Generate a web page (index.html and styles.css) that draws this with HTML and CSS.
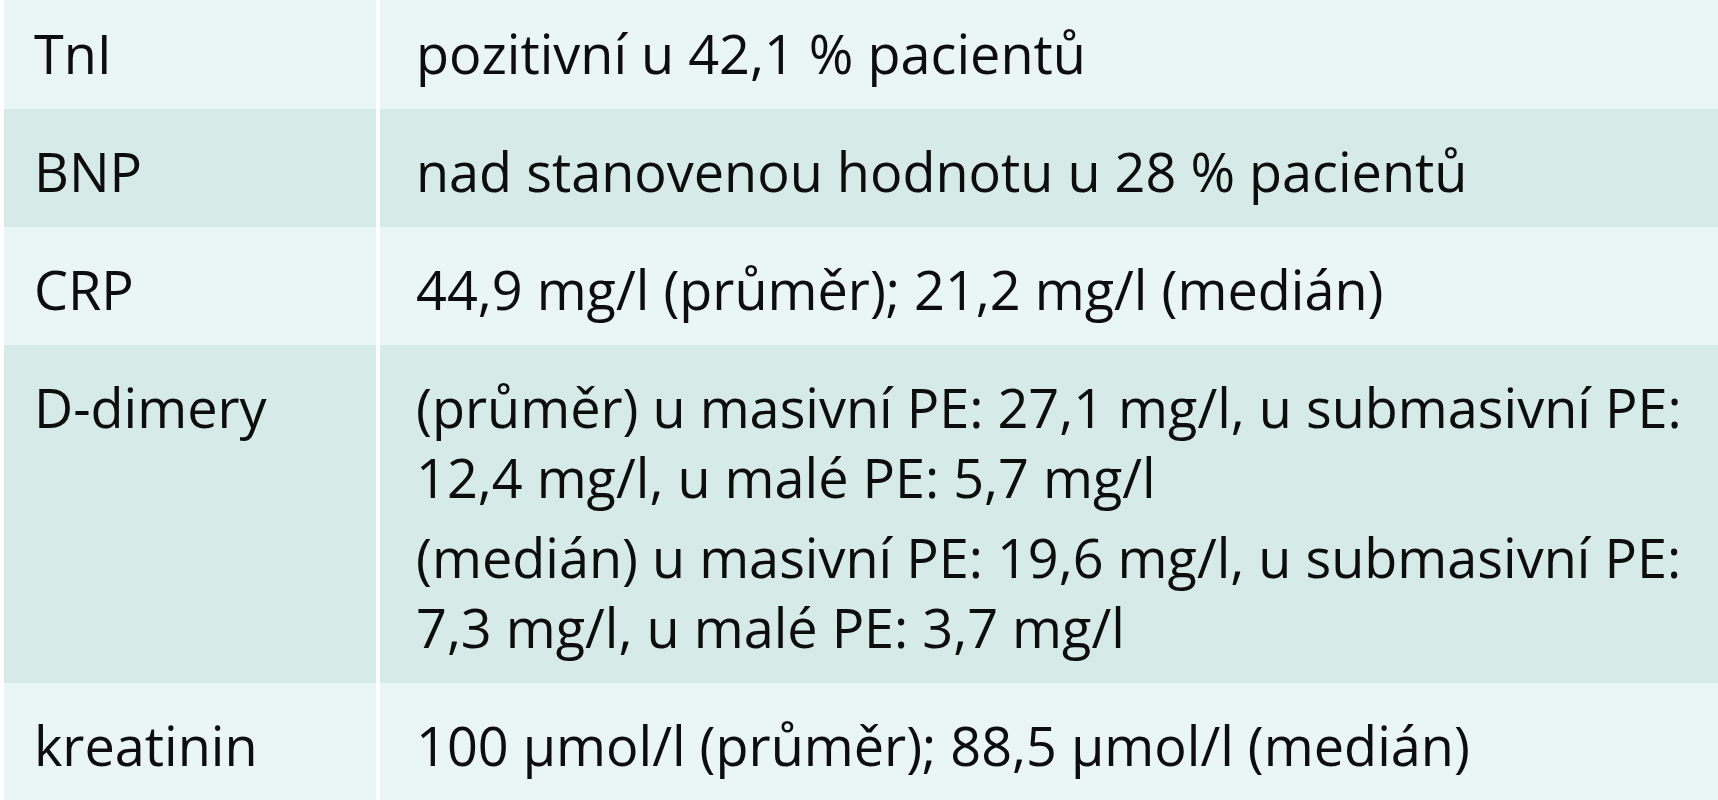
FILE: index.html
```html
<!DOCTYPE html>
<html lang="cs">
<head>
<meta charset="utf-8">
<title>Laboratorní nálezy</title>
<link rel="stylesheet" href="styles.css">
</head>
<body>
<div class="table">
  <div class="row light">
    <div class="cell key">TnI</div>
    <div class="cell val"><p>pozitivní u 42,1 % pacientů</p></div>
  </div>
  <div class="row dark">
    <div class="cell key">BNP</div>
    <div class="cell val"><p>nad stanovenou hodnotu u 28 % pacientů</p></div>
  </div>
  <div class="row light">
    <div class="cell key">CRP</div>
    <div class="cell val"><p>44,9 mg/l (průměr); 21,2 mg/l (medián)</p></div>
  </div>
  <div class="row dark">
    <div class="cell key">D-dimery</div>
    <div class="cell val">
      <p>(průměr) u masivní PE: 27,1 mg/l, u submasivní PE:<br>12,4 mg/l, u malé PE: 5,7 mg/l</p>
      <p>(medián) u masivní PE: 19,6 mg/l, u submasivní PE:<br>7,3 mg/l, u malé PE: 3,7 mg/l</p>
    </div>
  </div>
  <div class="row light">
    <div class="cell key">kreatinin</div>
    <div class="cell val"><p>100 µmol/l (průměr); 88,5 µmol/l (medián)</p></div>
  </div>
</div>
</body>
</html>
```

FILE: styles.css
```css
html, body {
  margin: 0;
  padding: 0;
  background: #ffffff;
}

body {
  font-family: "Open Sans", "Noto Sans", sans-serif;
  font-size: 54px;
  line-height: 70px;
  color: #0d0d0d;
  overflow: hidden;
}

.table {
  margin-top: -9px;
  padding-left: 4px;
  display: flex;
  flex-direction: column;
}

.row {
  display: grid;
  grid-template-columns: 372px 1fr;
  column-gap: 4px;
}

.cell {
  padding: 27px 30px 21px 30px;
  white-space: nowrap;
}

.cell.val {
  padding-left: 36px;
}

.row.light .cell {
  background: #eaf6f4;
}

.row.dark .cell {
  background: #d6ebe7;
}

.val p {
  margin: 0;
}

.val p + p {
  margin-top: 10px;
}
```
